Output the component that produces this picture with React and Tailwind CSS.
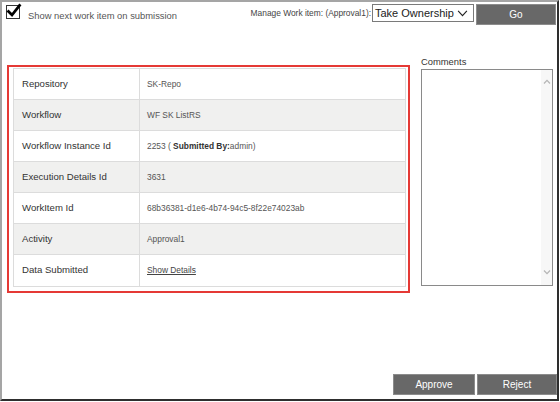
import React from 'react';

const rows = [
    { label: 'Repository', value: 'SK-Repo' },
    { label: 'Workflow', value: 'WF SK ListRS' },
    { label: 'Workflow Instance Id', value: 'instance' },
    { label: 'Execution Details Id', value: '3631' },
    { label: 'WorkItem Id', value: '68b36381-d1e6-4b74-94c5-8f22e74023ab' },
    { label: 'Activity', value: 'Approval1' },
    { label: 'Data Submitted', value: 'details' },
];

const renderValue = (value) => {
    if (value === 'instance') {
        return (
            <span>
                2253 ( <span className="font-bold text-[#333]">Submitted By:</span>admin)
            </span>
        );
    }
    if (value === 'details') {
        return <span className="underline text-[#444]">Show Details</span>;
    }
    return value;
};

export default function App() {
    return (
        <div
            className="w-[559px] h-[401px] bg-white flex flex-col border-l-2 border-t-2 border-r-2 border-b-2 border-l-[#a5a5a5] border-t-[#a5a5a5] border-r-[#2e2e2e] border-b-[#2e2e2e] font-['Liberation_Sans',Arial,sans-serif]"
        >
            {/* ── Top bar ── */}
            <div className="flex items-start pt-[2px] h-[23px]">
                <div className="flex items-start ml-[4px]">
                    <div className="relative mt-[1px] w-[14px] h-[14px] border border-[#333] bg-white">
                        <svg viewBox="0 0 16 16" className="absolute -left-[1px] -top-[3px] w-[16px] h-[16px]">
                            <path d="M2.5 8.5 L6 12 L13.5 2.5" fill="none" stroke="#000" strokeWidth="2.8" strokeLinecap="square" />
                        </svg>
                    </div>
                    <span className="ml-[8px] mt-[7px] text-[9.4px] text-[#555] leading-none">Show next work item on submission</span>
                </div>

                <div className="ml-auto flex items-start">
                    <span className="mt-[5px] text-[8.4px] text-[#444] leading-none">Manage Work item: (Approval1):</span>
                    <div className="ml-[1px] w-[102px] h-[18px] border border-[#7a7a7a] flex items-center justify-between pl-[2px] pr-[5px]">
                        <span className="text-[11px] text-[#222] leading-none">Take Ownership</span>
                        <svg viewBox="0 0 12 8" className="w-[11px] h-[7px]">
                            <path d="M1 1 L6 6.5 L11 1" fill="none" stroke="#222" strokeWidth="1.3" />
                        </svg>
                    </div>
                    <button className="ml-[2px] mr-[1px] w-[80px] h-[21px] bg-[#686868] border border-[#8c8c8c] text-white text-[10px] leading-none">
                        Go
                    </button>
                </div>
            </div>

            {/* ── Main ── */}
            <div className="flex items-start mt-[30px]">
                <div className="ml-[5px] mt-[10px] w-[403px] border-2 border-[#e53935] pl-[4px] pt-[1px] pr-[2px] pb-[4px]">
                    <div className="border border-[#dcdcdc]">
                        {rows.map((row, idx) => (
                            <div
                                key={row.label}
                                className={`flex h-[31px] ${idx < rows.length - 1 ? 'border-b border-[#dcdcdc]' : ''} ${idx % 2 === 1 ? 'bg-[#f0f0ef]' : 'bg-white'}`}
                            >
                                <div className="w-[126px] border-r border-[#dcdcdc] flex items-center pl-[8px] text-[9.6px] text-[#333]">
                                    {row.label}
                                </div>
                                <div className="flex-1 flex items-center pl-[7px] text-[8.4px] text-[#555]">
                                    {renderValue(row.value)}
                                </div>
                            </div>
                        ))}
                    </div>
                </div>

                <div className="ml-[11px] w-[132px] flex flex-col">
                    <span className="text-[9.4px] text-[#333] leading-[14px]">Comments</span>
                    <div className="h-[217px] border border-[#8a8a8a] flex justify-end">
                        <div className="w-[11px] h-full bg-[#f7f7f7] flex flex-col items-center justify-between pt-[9px] pb-[10px]">
                            <svg viewBox="0 0 8 5" className="w-[8px] h-[5px]">
                                <path d="M1 4.5 L4 1.3 L7 4.5" fill="none" stroke="#b5b5b5" strokeWidth="1.2" />
                            </svg>
                            <svg viewBox="0 0 8 5" className="w-[8px] h-[5px]">
                                <path d="M1 0.5 L4 3.7 L7 0.5" fill="none" stroke="#b5b5b5" strokeWidth="1.2" />
                            </svg>
                        </div>
                    </div>
                </div>
            </div>

            {/* ── Actions ── */}
            <div className="mt-auto flex justify-end gap-[2px] pb-[4px]">
                <button className="w-[82px] h-[21px] bg-[#686868] border border-[#8c8c8c] text-white text-[10px] leading-none">
                    Approve
                </button>
                <button className="w-[80px] h-[21px] bg-[#686868] border border-[#8c8c8c] text-white text-[10px] leading-none">
                    Reject
                </button>
            </div>
        </div>
    );
}
